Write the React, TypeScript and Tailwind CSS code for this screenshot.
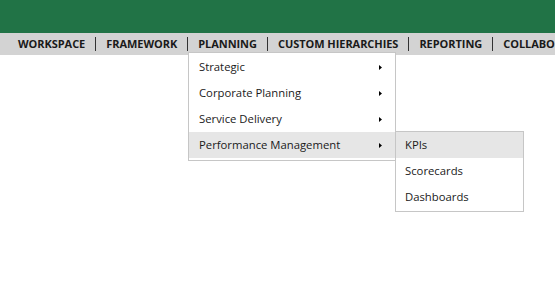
import React from "react";

const navItems = ["WORKSPACE", "FRAMEWORK", "PLANNING", "CUSTOM HIERARCHIES", "REPORTING", "COLLABORATION"];
const menu = ["Strategic", "Corporate Planning", "Service Delivery", "Performance Management"];
const sub = ["KPIs", "Scorecards", "Dashboards"];

function Arrow() {
  return (
    <svg width="3" height="5" viewBox="0 0 3 5" className="block">
      <path d="M0 0 L3 2.5 L0 5 Z" fill="#000" />
    </svg>
  );
}

export default function App() {
  return (
    <div
      className="relative w-[555px] h-[294px] bg-white overflow-hidden"
      style={{ fontFamily: '"Open Sans", "Noto Sans", sans-serif' }}
    >
      <div className="h-[33px] bg-[#217346]" />
      <div className="h-[22px] bg-[#d3d3d3] flex items-center pl-[8px] whitespace-nowrap">
        {navItems.map((n, i) => (
          <div key={n} className="flex items-center">
            {i > 0 && <div className="w-px h-[14px] bg-[#333]" />}
            <div className="px-[10px] text-[11px] font-bold text-[#1a1a1a] tracking-[-0.05px]">{n}</div>
          </div>
        ))}
      </div>
      <div className="absolute left-[188px] top-[52px] w-[208px] bg-white border border-[#c6c6c6] pt-[1px] pb-[2px]">
        {menu.map((m, i) => (
          <div
            key={m}
            className={`h-[26px] flex items-center justify-between pl-[10px] pr-[13px] text-[11.3px] text-[#1a1a1a] ${i === 3 ? "bg-[#e6e6e6]" : ""}`}
          >
            <span>{m}</span>
            <Arrow />
          </div>
        ))}
      </div>
      <div className="absolute left-[395px] top-[131px] w-[129px] bg-white border border-[#c6c6c6] pb-[1px]">
        {sub.map((s, i) => (
          <div
            key={s}
            className={`h-[26px] flex items-center pl-[9px] text-[11.3px] text-[#1a1a1a] ${i === 0 ? "bg-[#e6e6e6]" : ""}`}
          >
            {s}
          </div>
        ))}
      </div>
    </div>
  );
}
